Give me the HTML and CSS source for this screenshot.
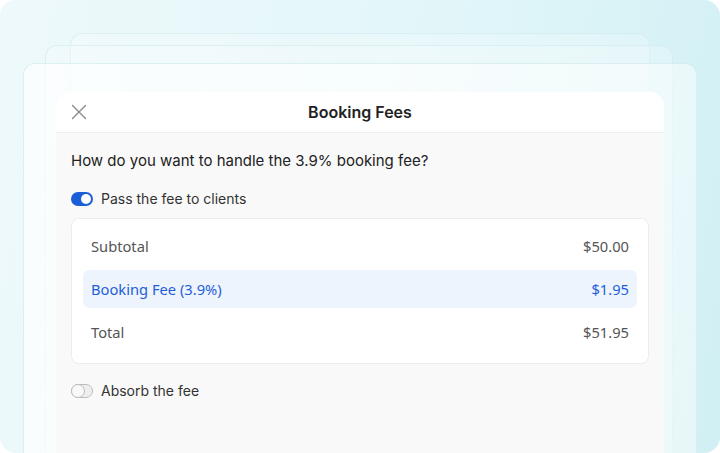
FILE: index.html
```html
<!DOCTYPE html>
<html lang="en">
<head>
    <meta charset="UTF-8">
    <meta name="viewport" content="width=device-width, initial-scale=1.0">
    <title>Booking Fees</title>
    <link rel="stylesheet" href="styles.css">
</head>
<body>
    <div class="frame">
        <div class="layer layer-back"></div>
        <div class="layer layer-mid"></div>

        <div class="sheet">
            <div class="modal">
                <div class="modal-header">
                    <button class="close-btn" aria-label="Close">
                        <svg width="16" height="16" viewBox="0 0 16 16">
                            <path d="M1.5 1.5 L14.5 14.5 M14.5 1.5 L1.5 14.5" stroke="#8a8a8a" stroke-width="1.4" fill="none" stroke-linecap="round"/>
                        </svg>
                    </button>
                    <h1 class="modal-title">Booking Fees</h1>
                </div>

                <div class="modal-body">
                    <p class="question">How do you want to handle the 3.9% booking fee?</p>

                    <label class="option">
                        <span class="toggle toggle-on"><span class="knob"></span></span>
                        <span>Pass the fee to clients</span>
                    </label>

                    <div class="summary">
                        <div class="row">
                            <span>Subtotal</span>
                            <span>$50.00</span>
                        </div>
                        <div class="row row-fee">
                            <span>Booking Fee (3.9%)</span>
                            <span>$1.95</span>
                        </div>
                        <div class="row">
                            <span>Total</span>
                            <span>$51.95</span>
                        </div>
                    </div>

                    <label class="option option-last">
                        <span class="toggle toggle-off"><span class="knob"></span></span>
                        <span>Absorb the fee</span>
                    </label>
                </div>
            </div>
        </div>
    </div>
</body>
</html>
```

FILE: styles.css
```css
* {
    margin: 0;
    padding: 0;
    box-sizing: border-box;
}

body {
    font-family: 'Inter', 'Noto Sans', sans-serif;
    background-color: #fff;
    color: #222;
}

.frame {
    position: relative;
    width: 720px;
    height: 453px;
    border-radius: 16px;
    overflow: hidden;
    background: linear-gradient(100deg, #eef9fb 0%, #e2f6f9 55%, #d1f0f4 100%);
}

/* stacked cards behind the sheet */
.layer {
    position: absolute;
    bottom: -20px;
    border-radius: 12px;
    background-color: rgba(255, 255, 255, 0.22);
    border: 1px solid rgba(200, 230, 236, 0.5);
}

.layer-back {
    left: 70px;
    right: 70px;
    top: 33px;
}

.layer-mid {
    left: 45px;
    right: 47px;
    top: 45px;
}

.sheet {
    position: relative;
    margin: 63px 0 0 23px;
    width: 674px;
    height: 410px;
    padding: 28px 32px 0;
    border-radius: 12px 12px 0 0;
    background: linear-gradient(100deg, rgba(255, 255, 255, 0.7) 0%, rgba(255, 255, 255, 0.45) 100%);
    border: 1px solid rgba(200, 230, 236, 0.6);
    border-bottom: none;
}

.modal {
    height: 100%;
    border-radius: 14px 14px 0 0;
    background-color: #f9f9f9;
    overflow: hidden;
}

.modal-header {
    position: relative;
    height: 41px;
    display: flex;
    align-items: center;
    justify-content: center;
    background-color: #fff;
    border-bottom: 1px solid #efefef;
}

.close-btn {
    position: absolute;
    left: 15px;
    top: 12px;
    width: 16px;
    height: 16px;
    border: none;
    background: none;
    cursor: pointer;
}

.close-btn svg {
    display: block;
}

.modal-title {
    font-size: 16px;
    font-weight: 600;
    color: #222;
}

.modal-body {
    padding: 18px 15px 0;
}

.question {
    font-size: 15px;
    color: #222;
    line-height: 20px;
}

.option {
    display: flex;
    align-items: center;
    gap: 8px;
    margin-top: 18px;
    font-size: 14px;
    color: #333;
    line-height: 20px;
}

.option-last {
    margin-top: 17px;
}

.toggle {
    position: relative;
    width: 22px;
    height: 14px;
    border-radius: 7px;
}

.toggle-on {
    background-color: #1b5fd8;
}

.toggle-on .knob {
    position: absolute;
    right: 2px;
    top: 2px;
    width: 10px;
    height: 10px;
    border-radius: 50%;
    background-color: #fff;
}

.toggle-off {
    border: 1.5px solid #bdbdbd;
    background-color: #efefef;
}

.toggle-off .knob {
    position: absolute;
    left: -1.5px;
    top: -1.5px;
    width: 14px;
    height: 14px;
    border-radius: 50%;
    border: 1.5px solid #bdbdbd;
    background-color: #f9f9f9;
}

.summary {
    display: flex;
    flex-direction: column;
    gap: 5px;
    margin-top: 9px;
    padding: 8px 11px 12px;
    background-color: #fff;
    border: 1px solid #ececec;
    border-radius: 8px;
}

.row {
    display: flex;
    justify-content: space-between;
    align-items: center;
    height: 38px;
    padding: 0 8px;
    font-family: 'Noto Sans', 'Inter', sans-serif;
    font-size: 14.7px;
    color: #555;
}

.row-fee {
    background-color: #eef4fe;
    border-radius: 6px;
    color: #1f5fd6;
}
```
